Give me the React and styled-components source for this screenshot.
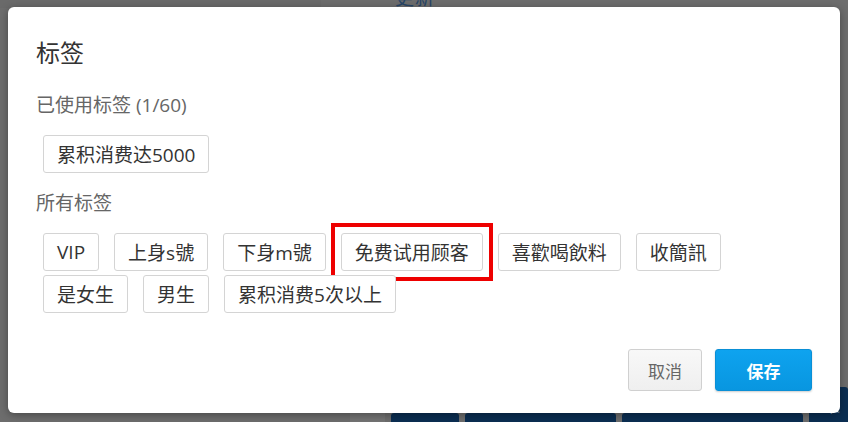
import styled, { createGlobalStyle } from "styled-components";

const GlobalStyle = createGlobalStyle`
  * { box-sizing: border-box; }
  html, body { margin: 0; padding: 0; }
  body {
    font-family: "Open Sans", "Noto Sans CJK SC", sans-serif;
    background: #6d6d6d;
    overflow: hidden;
  }
`;

const usedTags = ["累积消费达5000"];
const allTags = [
  "VIP",
  "上身s號",
  "下身m號",
  "免费试用顾客",
  "喜歡喝飲料",
  "收簡訊",
  "是女生",
  "男生",
  "累积消费5次以上",
];
const highlighted = "免费试用顾客";

export default function App() {
  return (
    <>
      <GlobalStyle />
      <Page>
        <PageHeader>
          <HeaderText>更新</HeaderText>
        </PageHeader>
        <PageFooter>
          <FooterSide />
          <FooterBar w={70} />
          <FooterBar w={158} />
          <FooterBar w={189} />
          <FooterBar w={40} tall>聚</FooterBar>
        </PageFooter>
      </Page>
      <Dialog>
        <Title>标签</Title>
        <Label>已使用标签 (1/60)</Label>
        <TagList>
          {usedTags.map((t) => (
            <Tag key={t}>{t}</Tag>
          ))}
        </TagList>
        <Label>所有标签</Label>
        <TagList>
          {allTags.map((t) => (
            <Tag key={t} $marked={t === highlighted}>
              {t}
            </Tag>
          ))}
        </TagList>
        <Actions>
          <CancelButton>取消</CancelButton>
          <SaveButton>保存</SaveButton>
        </Actions>
      </Dialog>
    </>
  );
}

const Page = styled.div`
  height: 100vh;
  display: flex;
  flex-direction: column;
  justify-content: space-between;
  background: #6d6d6d;
`;

const PageHeader = styled.div`
  height: 8px;
  overflow: hidden;
  padding-left: 74px;
  border-left: 321px solid #6a6a6a;
`;

const HeaderText = styled.div`
  margin-top: -12px;
  font-size: 19px;
  line-height: 20px;
  color: #274567;
  letter-spacing: 1px;
`;

const PageFooter = styled.div`
  display: flex;
  align-items: flex-end;
  gap: 6px;
  padding-left: 350px;
  height: 40px;
`;

const FooterSide = styled.div`
  width: 37px;
  height: 9px;
  background: #747474;
`;

const FooterBar = styled.div`
  width: ${(p) => p.w}px;
  height: ${(p) => (p.tall ? 35 : 9)}px;
  background: #0b2e52;
  border-radius: 3px 3px 0 0;
  color: #6f86a0;
  font-size: 18px;
  line-height: 20px;
  padding: 8px 0 0 13px;
  overflow: hidden;
`;

const Dialog = styled.div`
  position: absolute;
  left: 8px;
  top: 7px;
  width: 832px;
  height: 406px;
  background: #fff;
  border-radius: 6px;
  box-shadow: 0 2px 8px rgba(0, 0, 0, 0.35);
  padding: 29px 28px 22px;
  display: flex;
  flex-direction: column;
`;

const Title = styled.h2`
  margin: 0;
  font-size: 24px;
  line-height: 34px;
  font-weight: 400;
  color: #333;
`;

const Label = styled.div`
  margin-top: 22px;
  font-size: 19px;
  line-height: 26px;
  color: #666;
  & + div {
    margin-top: 17px;
  }
  div + & {
    margin-top: 17px;
  }
`;

const TagList = styled.div`
  display: flex;
  flex-wrap: wrap;
  gap: 4px 15px;
  padding-left: 7px;
  max-width: 700px;
`;

const Tag = styled.div`
  position: relative;
  height: 38px;
  padding: 0 13px;
  display: flex;
  align-items: center;
  font-size: 19px;
  color: #333;
  background: #fff;
  border: 1px solid #d4d4d4;
  border-radius: 3px;
  white-space: nowrap;
  &::after {
    content: "";
    display: ${(p) => (p.$marked ? "block" : "none")};
    position: absolute;
    inset: -11px;
    border: 4px solid #ee0000;
    pointer-events: none;
  }
`;

const Actions = styled.div`
  margin-top: auto;
  display: flex;
  justify-content: flex-end;
  gap: 13px;
`;

const CancelButton = styled.button`
  width: 74px;
  height: 42px;
  font-family: inherit;
  font-size: 17px;
  color: #666;
  background: linear-gradient(#f8f8f8, #efefef);
  border: 1px solid #d0d0d0;
  border-radius: 3px;
`;

const SaveButton = styled.button`
  width: 97px;
  height: 42px;
  font-family: inherit;
  font-size: 17px;
  font-weight: 600;
  color: #fff;
  background: linear-gradient(#0ea3ef, #0896e0);
  border: 1px solid #0a8fd6;
  border-radius: 3px;
  box-shadow: 0 1px 2px rgba(0, 0, 0, 0.2);
`;
